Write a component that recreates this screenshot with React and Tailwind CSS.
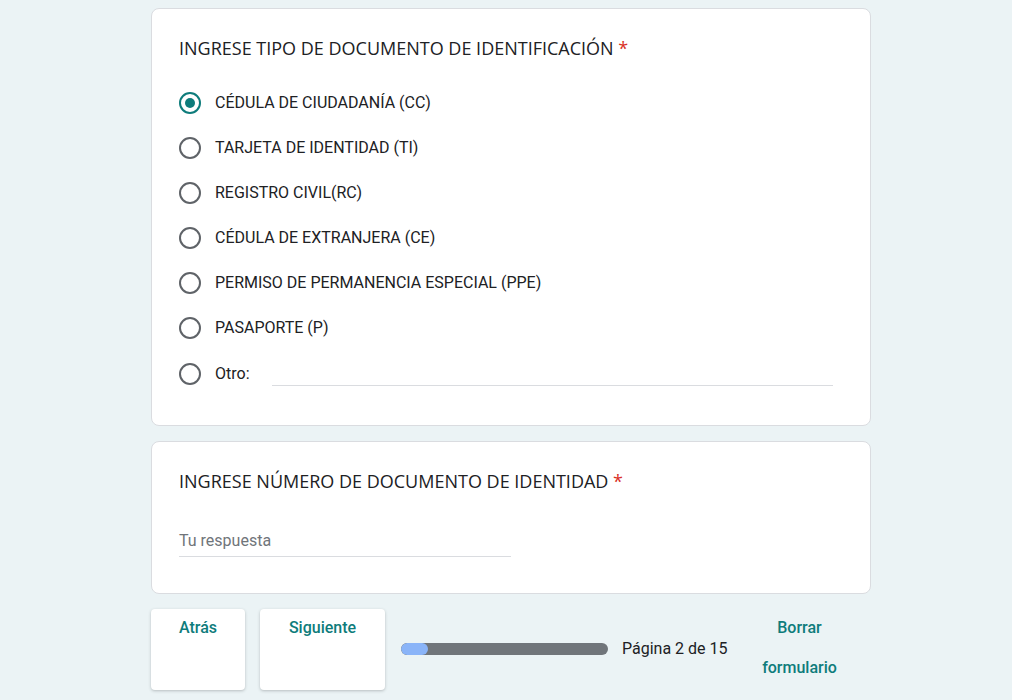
const options = [
  'CÉDULA DE CIUDADANÍA (CC)',
  'TARJETA DE IDENTIDAD (TI)',
  'REGISTRO CIVIL(RC)',
  'CÉDULA DE EXTRANJERA (CE)',
  'PERMISO DE PERMANENCIA ESPECIAL (PPE)',
  'PASAPORTE (P)',
];

function Radio({ checked }) {
  return (
    <span
      className={`flex h-[22px] w-[22px] shrink-0 items-center justify-center rounded-full border-2 ${
        checked ? 'border-[#0e7c7b]' : 'border-[#5f6368]'
      }`}
    >
      {checked && <span className="h-[10px] w-[10px] rounded-full bg-[#0e7c7b]" />}
    </span>
  );
}

export default function App() {
  return (
    <div className="min-h-[700px] bg-[#ebf3f5] pl-[151px] pt-[8px] font-['Roboto',sans-serif] text-[#202124]">
      <div className="w-[720px]">
        {/* Tipo de documento */}
        <div className="rounded-lg border border-[#dadce0] bg-white px-[27px] pb-[29px] pt-[26px]">
          <h2 className="font-['Open_Sans',sans-serif] text-[18px] leading-[26px]">
            INGRESE TIPO DE DOCUMENTO DE IDENTIFICACIÓN <span className="text-[#d93025]">*</span>
          </h2>
          <div className="mt-[19px] flex flex-col">
            {options.map((o, i) => (
              <label key={o} className="flex h-[45px] items-center gap-[14px] text-[16px]">
                <Radio checked={i === 0} />
                <span>{o}</span>
              </label>
            ))}
            <div className="mt-[1px] flex h-[45px] items-center text-[16px]">
              <Radio />
              <span className="ml-[14px] w-[57px]">Otro:</span>
              <div className="mr-[10px] mt-[24px] h-px flex-1 bg-[#dadce0]" />
            </div>
          </div>
        </div>

        {/* Número de documento */}
        <div className="mt-[15px] rounded-lg border border-[#dadce0] bg-white px-[27px] pb-[36px] pt-[26px]">
          <h2 className="font-['Open_Sans',sans-serif] text-[18px] leading-[26px]">
            INGRESE NÚMERO DE DOCUMENTO DE IDENTIDAD <span className="text-[#d93025]">*</span>
          </h2>
          <div className="mt-[35px] w-[332px] border-b border-[#dadce0] pb-[3px] text-[16px] leading-6 text-[#70757a]">
            Tu respuesta
          </div>
        </div>

        {/* Navegación */}
        <div className="mt-[15px] flex items-start">
          <button className="flex h-[81px] w-[94px] items-start justify-center rounded bg-white pt-[7px] text-[16px] font-medium leading-6 text-[#0e7c7b] shadow-[0_1px_3px_rgba(60,64,67,0.3)]">
            Atrás
          </button>
          <button className="ml-[15px] flex h-[81px] w-[125px] items-start justify-center rounded bg-white pt-[7px] text-[16px] font-medium leading-6 text-[#0e7c7b] shadow-[0_1px_3px_rgba(60,64,67,0.3)]">
            Siguiente
          </button>
          <div className="ml-[16px] mt-[28px] flex items-center">
            <div className="h-[12px] w-[207px] overflow-hidden rounded-full bg-[#70757a]">
              <div className="h-full w-[27px] rounded-full bg-[#8ab4f8]" />
            </div>
            <span className="ml-[14px] text-[16px] leading-6">Página 2 de 15</span>
          </div>
          <div className="ml-[22px] mt-[7px] w-[100px] text-center text-[16px] font-medium text-[#0e7c7b]">
            <div className="leading-[24px]">Borrar</div>
            <div className="mt-[16px] leading-[24px]">formulario</div>
          </div>
        </div>
      </div>
    </div>
  );
}
